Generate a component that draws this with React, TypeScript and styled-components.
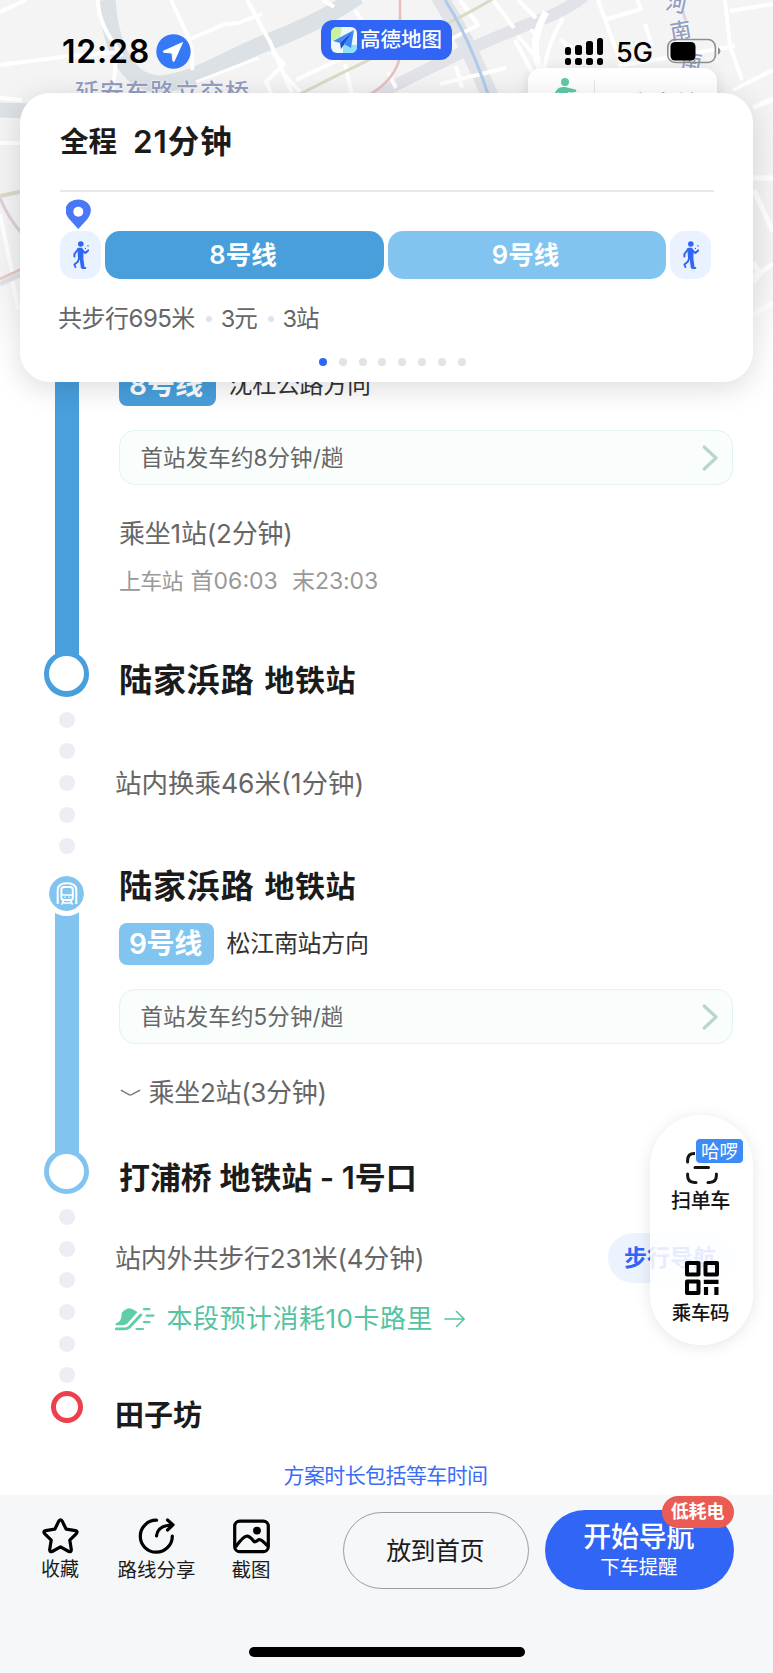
import React from "react";
import styled, { createGlobalStyle } from "styled-components";

const BLUE8 = "#489fdc";
const BLUE9 = "#82c4f0";

const GlobalStyle = createGlobalStyle`
  * { box-sizing: border-box; }
  body {
    margin: 0;
    background: #fff;
    font-family: "Inter", "Noto Sans CJK SC", sans-serif;
  }
  svg { display: block; flex: none; }
`;

interface TextProps {
  $size: number;
  $weight?: number;
  $ls?: number;
  $color?: string;
  $lh?: number;
}

const Text = styled.span<TextProps>`
  display: block;
  flex: none;
  white-space: pre;
  font-size: ${(p) => p.$size}px;
  font-weight: ${(p) => p.$weight ?? 400};
  letter-spacing: ${(p) => p.$ls ?? 0}px;
  color: ${(p) => p.$color ?? "#666"};
  line-height: ${(p) => p.$lh ?? 36}px;
`;

const Screen = styled.main`
  position: relative;
  width: 773px;
  height: 1673px;
  overflow: hidden;
  background: #fff;
  display: flex;
  flex-direction: column;
`;

/* ---------- map backdrop ---------- */

const MapLayer = styled.div`
  position: absolute;
  inset: 0 0 auto 0;
  height: 400px;
  &::after {
    content: "";
    position: absolute;
    inset: 265px 0 0 0;
    background: linear-gradient(rgba(255, 255, 255, 0), #fff 62%);
  }
`;

const PlaceName = styled.span<{ $x: number; $y: number; $size: number; $turn?: number; $ls?: number }>`
  position: absolute;
  left: ${(p) => p.$x}px;
  top: ${(p) => p.$y}px;
  font-size: ${(p) => p.$size}px;
  line-height: 30px;
  font-weight: 500;
  letter-spacing: ${(p) => p.$ls ?? 0}px;
  color: #949fc2;
  white-space: nowrap;
  text-shadow: 0 0 2px #fff, 0 0 2px #fff;
  transform: rotate(${(p) => p.$turn ?? 0}deg);
`;

const MapChip = styled.div`
  position: absolute;
  left: 528px;
  top: 68px;
  width: 189px;
  height: 60px;
  padding: 10px 18px 0 27px;
  display: flex;
  align-items: flex-start;
  border-radius: 13px;
  background: #fff;
  box-shadow: 0 2px 14px rgba(0, 0, 0, 0.12);
`;

const ChipRule = styled.i`
  width: 1px;
  height: 30px;
  margin: 2px 11px 0 17px;
  background: #e8e8e8;
`;

const ChipText = styled.span`
  padding-top: 9px;
  font-size: 23px;
  line-height: 34px;
  white-space: nowrap;
  color: #222;
`;

const CityMap = () => (
  <svg width="773" height="400" viewBox="0 0 773 400" fill="none">
    <rect width="773" height="400" fill="#f4f4f4" />
    <g stroke="#dce1e5">
      <path d="M107 0C110 40 124 84 160 84C195 82 226 58 268 42C302 29 330 16 358 -4" strokeWidth="17" />
      <path d="M112 30Q118 78 158 86L196 79" strokeWidth="14" />
      <path d="M0 110L30 111" strokeWidth="15" />
    </g>
    <g stroke="#e1e3e8">
      <path d="M360 104Q470 45 545 18Q568 9 584 -4" strokeWidth="12" />
      <path d="M439 -4Q462 34 471 54L492 100" strokeWidth="17" />
    </g>
    <g stroke="#fff" strokeWidth="4" strokeLinejoin="round">
      <path d="M0 12L26 0M98 0C98 22 110 38 122 56M0 65L70 56L122 52M116 58L113 92M0 98L22 100M0 143H26" />
      <path d="M171 0L187 34Q194 52 192 70M188 40L225 24L238 23L262 14" />
      <path d="M196 82L258 58" strokeWidth="3" />
      <path d="M247 0L270 42L292 93M272 52L284 64L266 82L272 95M284 74L300 92M323 0L334 7M355 10L372 38M330 22L352 60M370 45L296 80M345 64L352 95" />
      <path d="M460 0L478 25L430 50M493 0L514 28M518 0L536 18M540 35L530 30M540 62L518 36M515 40L532 72M456 66L462 88M440 84L506 68M388 72L396 88" />
      <path d="M563 18Q548 42 544 70M598 0L606 22L622 66M604 20L641 9L636 -3M645 24L652 46M560 40L572 48M618 66L735 46" />
      <path d="M725 0L730 46L742 80M730 11L773 4M733 90L773 70M690 46L700 70" />
      <path d="M753 108L773 99M753 178L773 178M754 190L773 232M753 277L773 264M753 315L773 303M753 262L760 274L753 282" strokeWidth="5" />
      <path d="M0 214L12 272M12 278L18 310" />
    </g>
    <path d="M546 12Q528 44 540 68" stroke="#fff" strokeWidth="7" />
    <path d="M499 -5C450 26 430 28 300 94" stroke="#d9dbc6" strokeWidth="3" />
    <path d="M0 196L24 191" stroke="#d9dbc6" strokeWidth="4" />
    <path d="M400 0V56Q396 78 371 94M0 279L24 268" stroke="#e6bfc1" strokeWidth="2.6" />
    <path d="M0 198Q8 218 24 236" stroke="#dfcddc" strokeWidth="3" />
    <path d="M0 284L24 273" stroke="#d9dbe4" strokeWidth="5" />
    <path d="M445 0Q454 14 461 28Q476 58 488 94" stroke="#aecbec" strokeWidth="3" />
    <path d="M682 8L686 22" stroke="#ddd3e4" strokeWidth="3" />
  </svg>
);

const ChipWalker = () => (
  <svg width="22" height="30" viewBox="0 0 22 30" fill="#5ccca6">
    <circle cx="10" cy="4" r="4" />
    <path d="M5 9.6Q7 8.6 10 9L20.5 11.4Q22 12.4 21 13.8Q17 15 13 14L12 22H4V14L1 17Q-1 16 .6 13.4Q2.6 10.4 5 9.6Z" />
  </svg>
);

/* ---------- status bar ---------- */

const StatusBar = styled.header`
  position: relative;
  height: 93px;
  flex: none;
  display: flex;
  align-items: flex-start;
`;

const Clock = styled(Text)`
  width: 94px;
  margin: 34px 0 0 62px;
`;

const AmapBadge = styled.div`
  width: 131px;
  height: 40px;
  margin: 20px 0 0 130px;
  padding-left: 10px;
  display: flex;
  align-items: center;
  gap: 3px;
  border-radius: 12px;
  background: #3065f6;
`;

const Signal = styled.div`
  width: 39px;
  height: 27px;
  margin: 38px 0 0 112.5px;
  display: flex;
  justify-content: space-between;
`;

const SignalColumn = styled.div<{ $h: number }>`
  width: 6.6px;
  display: flex;
  flex-direction: column;
  justify-content: flex-end;
  gap: 3.5px;
  &::before {
    content: "";
    height: ${(p) => p.$h}px;
    border-radius: 2.5px;
    background: #000;
  }
  &::after {
    content: "";
    height: 7px;
    border-radius: 2.5px;
    background: #000;
  }
`;

const Network = styled(Text)`
  width: 37px;
  margin: 34.5px 0 0 12.5px;
`;

const StatusIcon = styled.svg<{ $top: number; $left?: number }>`
  margin: ${(p) => p.$top}px 0 0 ${(p) => p.$left ?? 0}px;
`;

const LocationIcon = () => (
  <StatusIcon $top={34} width="35" height="35" viewBox="0 0 35 35">
    <circle cx="17.5" cy="17.5" r="17.2" fill="#3579f6" />
    <path d="M26.5 8.6L7.4 17.2Q6.7 18 7.8 18.2L16 19.1L17 27Q17.4 28.2 18.1 27.2Z" fill="#fff" stroke="#fff" strokeWidth="1" strokeLinejoin="round" />
  </StatusIcon>
);

const AmapLogo = () => (
  <svg width="26" height="26" viewBox="0 0 26 26">
    <defs>
      <clipPath id="logo"><rect width="26" height="26" rx="6" /></clipPath>
    </defs>
    <g clipPath="url(#logo)">
      <rect width="26" height="26" fill="#eef7fb" />
      <path d="M0 0H11L9 10L0 14Z" fill="#c9f29b" />
      <path d="M12 17L26 18V26H12Z" fill="#8fe0fb" />
      <path d="M23 3L2 14L9 16Z" fill="#3f8df8" />
      <path d="M23 3L9 16L10 22Z" fill="#1c50cf" />
      <path d="M23 3L13 17L20 21Z" fill="#3d86f7" />
    </g>
  </svg>
);

const BatteryIcon = () => (
  <StatusIcon $top={38} $left={12.5} width="56" height="26" viewBox="0 0 56 26">
    <rect x="1.8" y="1.5" width="47.6" height="23" rx="7.5" fill="none" stroke="#8d8e90" strokeWidth="1.6" />
    <rect x="4.5" y="4" width="25" height="18.5" rx="4.5" />
    <path d="M52 9Q57 13 52 17Z" fill="#8d8e90" />
  </StatusIcon>
);

/* ---------- summary card ---------- */

const SummaryCard = styled.section`
  position: relative;
  z-index: 2;
  flex: none;
  width: 733px;
  height: 289px;
  margin-left: 20px;
  padding: 29px 40px 0;
  display: flex;
  flex-direction: column;
  border-radius: 30px;
  background: #fff;
  box-shadow: 0 6px 30px rgba(0, 0, 0, 0.14);
`;

const CardTitle = styled.h1`
  margin: 0;
  height: 40px;
  display: flex;
  gap: 16px;
`;

const Divider = styled.hr`
  width: 654px;
  height: 1.5px;
  margin: 28px 0 7.5px;
  border: 0;
  background: #e9e9ea;
`;

const Segments = styled.div`
  height: 48px;
  margin: 2px 0 0 -0.5px;
  display: grid;
  grid-template-columns: 41px 279px 278px 41px;
  gap: 4px;
`;

const SegmentPill = styled.div<{ $bg: string; $nudge?: number }>`
  display: flex;
  align-items: center;
  justify-content: center;
  padding-right: ${(p) => p.$nudge ?? 0}px;
  border-radius: 15px;
  background: ${(p) => p.$bg};
`;

const Facts = styled.div`
  margin: 22px 0 0 -2px;
  display: flex;
  align-items: center;
`;

const FactDot = styled.i`
  width: 6px;
  height: 6px;
  margin: 0 8.7px 0 11.2px;
  border-radius: 50%;
  background: #dfe2e7;
`;

const Pager = styled.div`
  margin: 20.5px 0 0 259px;
  display: flex;
  gap: 11.8px;
`;

const PagerDot = styled.i<{ $on?: boolean }>`
  width: 8px;
  height: 8px;
  border-radius: 50%;
  background: ${(p) => (p.$on ? "#3065f6" : "#e0e3e8")};
`;

const Pin = styled.svg`
  margin-left: 6.3px;
`;

const PinIcon = () => (
  <Pin width="25" height="30" viewBox="0 0 25 30">
    <path d="M12.3 30L3.6 20.6C-6 9 3 0.4 12.3 0.4S30 9 21 20.6Z" fill="#4878f7" />
    <circle cx="12.3" cy="12.8" r="5" fill="#fff" />
  </Pin>
);

const WalkIcon = () => (
  <svg width="18" height="28" viewBox="-1 0 18 28" fill="none" stroke="#2f66f5" strokeLinecap="round" strokeLinejoin="round">
    <circle cx="8.8" cy="3" r="2.8" fill="#2f66f5" stroke="none" />
    <path d="M6 7.4H9.6L11 9.4L10.8 18L12 26.6H9.4L8.4 18.5L6.6 17Z" fill="#2f66f5" strokeWidth="1.2" />
    <path d="M6 8.4L2.4 13V15.4M10 9.4L13.4 12L16.2 9.4" strokeWidth="2" />
    <path d="M7.2 17L5.8 20.8L2.4 23.6L3.4 26M10.6 27H13.4" strokeWidth="1.9" />
    <path d="M13.4 7.4V7.5M16 4.8V4.9" strokeWidth="1.4" />
  </svg>
);

/* ---------- route list ---------- */

const Route = styled.section`
  position: relative;
  z-index: 1;
  flex: none;
  height: 1131px;
  margin-top: -18px;
  display: flex;
  flex-direction: column;
`;

const Leg = styled.div<{ $h: number }>`
  height: ${(p) => p.$h}px;
  flex: none;
  display: grid;
  grid-template-columns: 105px 614px;
  padding-left: 14px;
`;

const Rail = styled.div<{ $top?: number; $bottom?: number; $gap?: number }>`
  display: flex;
  flex-direction: column;
  align-items: center;
  gap: ${(p) => p.$gap ?? 0}px;
  padding: ${(p) => p.$top ?? 0}px 0 ${(p) => p.$bottom ?? 0}px;
`;

const Body = styled.div<{ $top?: number; $shift?: number }>`
  padding-top: ${(p) => p.$top ?? 0}px;
  margin-left: ${(p) => p.$shift ?? 0}px;
  display: flex;
  flex-direction: column;
`;

const Track = styled.div<{ $color: string }>`
  flex: 1;
  width: 24px;
  background: ${(p) => p.$color};
`;

const Ring = styled.div<{ $color: string; $size: number; $inner: number }>`
  position: relative;
  width: ${(p) => p.$size}px;
  height: ${(p) => p.$size}px;
  flex: none;
  margin-top: -4px;
  padding: ${(p) => (p.$size - p.$inner) / 2}px;
  border-radius: 50%;
  background: ${(p) => p.$color};
  &::before {
    content: "";
    display: block;
    height: 100%;
    border-radius: 50%;
    background: #fff;
  }
`;

const WalkDot = styled.i`
  width: 16px;
  height: 16px;
  flex: none;
  border-radius: 50%;
  background: #edeef3;
`;

const MetroBadge = styled.div`
  position: relative;
  width: 45px;
  height: 45px;
  flex: none;
  margin-bottom: -8px;
  border: 5px solid #fff;
  border-radius: 50%;
  background: ${BLUE9};
  background-clip: padding-box;
  display: flex;
  align-items: center;
  justify-content: center;
`;

const LineRow = styled.div<{ $top?: number }>`
  height: 42px;
  margin-top: ${(p) => p.$top ?? 0}px;
  display: flex;
  align-items: center;
`;

const LineTag = styled.div<{ $bg: string; $w: number }>`
  width: ${(p) => p.$w}px;
  height: 42px;
  margin-right: 12.5px;
  display: flex;
  align-items: center;
  padding-left: 10px;
  border-radius: 8px;
  background: ${(p) => p.$bg};
`;

const Frequency = styled.div`
  height: 55px;
  margin-top: 24px;
  padding: 1px 14.5px 0 20.5px;
  display: flex;
  align-items: center;
  justify-content: space-between;
  border: 1.5px solid #e1f4ed;
  border-radius: 16px;
  background: #f9fdfc;
`;

const Line = styled.div<{ $top: number; $gap?: number }>`
  margin-top: ${(p) => p.$top}px;
  display: flex;
  align-items: center;
  gap: ${(p) => p.$gap ?? 0}px;
`;

const WalkNav = styled.div`
  width: 125px;
  height: 50px;
  margin: -8px 0 -6px auto;
  padding-left: 16px;
  display: flex;
  align-items: center;
  border-radius: 25px;
  background: #edf2ff;
`;

const Note = styled.div`
  margin-top: 26px;
  padding-right: 2px;
  display: flex;
  justify-content: center;
`;

const Station = ({ top = 0 }: { top?: number }) => (
  <Line $top={top} $gap={10}>
    <Text $size={33} $weight={600} $ls={0.9} $color="#1b1b1b" $lh={40}>陆家浜路</Text>
    <Text $size={30} $weight={600} $ls={0.4} $color="#1b1b1b" $lh={40}>地铁站</Text>
  </Line>
);

const ChevronRight = () => (
  <svg width="16" height="26" viewBox="0 0 16 26" fill="none">
    <path d="M2.2 2L14 13L2.2 24" stroke="#b9d6cd" strokeWidth="3.2" strokeLinecap="round" strokeLinejoin="round" />
  </svg>
);

const MetroIcon = () => (
  <svg width="22" height="25" viewBox="0 0 22 25" fill="none" stroke="#fff">
    <path d="M1.7 23V9Q1.7 2.2 11 2.2T20.3 9V23" strokeWidth="2" />
    <rect x="5.4" y="6" width="11.4" height="13" rx="2.6" strokeWidth="2" />
    <path d="M6 14H16M7.6 19.8L5.6 23.6M14.6 19.8L16.6 23.6M7.5 22H14.7" strokeWidth="1.6" />
    <path d="M8.4 16.3H9.6M12.6 16.3H13.8" strokeWidth="1.6" />
  </svg>
);

const ExpandIcon = () => (
  <svg width="22" height="8" viewBox="0 0 22 8" fill="none">
    <path d="M2.4 1.4L10 5.6Q11.2 6.2 12.6 5.6L20.6 1.4" stroke="#777" strokeWidth="1.5" strokeLinecap="round" />
  </svg>
);

const ShoeIcon = () => (
  <svg width="40" height="24" viewBox="0 0 40 24" fill="none">
    <path d="M6.6 6Q10 1.6 14 1.2Q17 1.2 22.5 5L12.4 16.4Q10 18.6 1 18.2Q-.4 17 2 15.8Q7 14 6.6 6Z" fill="#5fcea8" />
    <path d="M25.8 8L15.5 19Q13.5 21.8 9 21.8H1.2" stroke="#5fcea8" strokeWidth="2.8" strokeLinecap="round" />
    <path d="M29 2.2H34.5M31.5 8.6H38.5M29 15.2H34.5M21.5 22H28" stroke="#5fcea8" strokeWidth="2.2" strokeLinecap="round" />
  </svg>
);

const ArrowRight = () => (
  <svg width="22" height="18" viewBox="0 0 22 18" fill="none">
    <path d="M1 9H20M12.5 1.5L20.2 9L12.5 16.5" stroke="#55c3a0" strokeWidth="1.6" strokeLinecap="round" strokeLinejoin="round" />
  </svg>
);

/* ---------- floating panel ---------- */

const FloatPanel = styled.aside`
  position: absolute;
  z-index: 3;
  left: 650px;
  top: 1115px;
  width: 103px;
  height: 230px;
  padding-top: 37px;
  display: flex;
  flex-direction: column;
  align-items: center;
  border-radius: 52px;
  background: rgba(255, 255, 255, 0.88);
  box-shadow: 0 2px 16px rgba(0, 0, 0, 0.1);
`;

const HelloBadge = styled.div`
  position: absolute;
  left: 45px;
  top: 23px;
  width: 49px;
  height: 26px;
  display: flex;
  align-items: center;
  justify-content: center;
  border: 1px solid #fff;
  border-radius: 5px;
  background: #3d8bf6;
`;

const PanelLabel = styled(Text)<{ $top: number }>`
  margin: ${(p) => p.$top}px 2px 0 0;
`;

const QrSlot = styled.div`
  margin-top: 45px;
`;

const ScanIcon = () => (
  <svg width="32" height="32" viewBox="0 0 32 32" fill="none" stroke="#151515" strokeWidth="3" strokeLinecap="round">
    <path d="M1.6 10V8.5Q1.6 1.6 8.5 1.6H10M22 1.6H23.5Q30.4 1.6 30.4 8.5V10M1.6 22V23.5Q1.6 30.4 8.5 30.4H10M30.4 22V23.5Q30.4 30.4 23.5 30.4H22M9 15.6H22.5" />
  </svg>
);

const QrIcon = () => (
  <svg width="34" height="34" viewBox="0 0 34 34" fill="none" stroke="#000">
    <path d="M2 2H13.5V13.5H2ZM20.5 2H32V13.5H20.5ZM2 20.5H13.5V32H2Z" strokeWidth="4" strokeLinejoin="round" />
    <path d="M18.8 20.8H33.5M21 26V34M31.4 26V34" strokeWidth="4.2" />
  </svg>
);

/* ---------- bottom bar ---------- */

const BottomBar = styled.footer`
  position: relative;
  z-index: 2;
  flex: none;
  height: 178px;
  display: flex;
  align-items: flex-start;
  background: #f6f7f9;
`;

const Action = styled.button<{ $left: number; $w: number }>`
  width: ${(p) => p.$w}px;
  margin: 22.5px 0 0 ${(p) => p.$left}px;
  padding: 0;
  border: 0;
  background: none;
  font-family: inherit;
  display: flex;
  flex-direction: column;
  align-items: center;
  gap: 1px;
`;

const HomeButton = styled.button`
  width: 186px;
  height: 77px;
  margin: 17px 0 0 63px;
  padding: 0 2px 0 0;
  font-family: inherit;
  display: flex;
  align-items: center;
  justify-content: center;
  border: 1.3px solid #9c9d9f;
  border-radius: 39px;
  background: transparent;
`;

const StartButton = styled.button`
  position: relative;
  width: 188.5px;
  height: 80px;
  margin: 15px 0 0 16px;
  padding: 10px 1px 0 0;
  border: 0;
  font-family: inherit;
  display: flex;
  flex-direction: column;
  align-items: center;
  border-radius: 40px;
  background: #3165f6;
`;

const PowerBadge = styled.div`
  position: absolute;
  right: 0;
  top: -14px;
  width: 72px;
  height: 32px;
  display: flex;
  align-items: center;
  justify-content: center;
  border-radius: 16px;
  background: #ea5b53;
`;

const HomeIndicator = styled.div`
  position: absolute;
  left: 249px;
  bottom: 16px;
  width: 276px;
  height: 10px;
  border-radius: 5px;
  background: #000;
`;

const StarIcon = () => (
  <svg width="37" height="36" viewBox="0 0 37 36" fill="none">
    <path d="M16.9 2.9Q18.5 .6 20.1 2.9L24.2 11.2L33.4 12.6Q36.2 13.4 34.4 15.6L27.8 22.2L29.3 31.6Q29.4 34.4 26.8 33.5L18.5 28.9L10.2 33.5Q7.6 34.4 7.7 31.6L9.2 22.2L2.6 15.6Q.8 13.4 3.6 12.6L12.8 11.2Z" stroke="#000" strokeWidth="3.2" strokeLinejoin="round" />
  </svg>
);

const ShareIcon = () => (
  <svg width="37" height="36" viewBox="0 0 37 36" fill="none" stroke="#000" strokeWidth="3.2" strokeLinecap="round" strokeLinejoin="round">
    <path d="M18.5 2.2A16 16 0 1 0 34.3 18" />
    <path d="M18.5 18Q19.5 7.5 34.5 7M29.5 2L35 6.9L29.5 12" />
  </svg>
);

const PictureIcon = () => (
  <svg width="37" height="36" viewBox="0 0 37 36" fill="none" stroke="#000" strokeWidth="3.2">
    <rect x="1.7" y="3.2" width="33.6" height="30.5" rx="5" />
    <circle cx="24" cy="12.6" r="3.9" fill="#000" stroke="none" />
    <path d="M2.5 29Q11 17 14.5 18.2Q17 18.5 21 23.6Q22.2 24.6 26 21.6Q28.5 21 34.5 28" strokeLinejoin="round" />
  </svg>
);

const dots = (n: number) => Array.from({ length: n }, (_, i) => <WalkDot key={i} />);

export default function App() {
  return (
    <Screen>
      <GlobalStyle />
      <MapLayer>
        <CityMap />
        <PlaceName $x={75} $y={78} $size={24} $ls={1}>延安东路立交桥</PlaceName>
        <PlaceName $x={666} $y={-11} $size={21} $turn={12}>河</PlaceName>
        <PlaceName $x={670} $y={16} $size={21} $turn={-10}>南</PlaceName>
        <PlaceName $x={681} $y={47} $size={21} $turn={10}>南</PlaceName>
        <MapChip>
          <ChipWalker />
          <ChipRule />
          <ChipText>少走多益</ChipText>
        </MapChip>
      </MapLayer>

      <StatusBar>
        <Clock $size={32} $weight={600} $ls={0.8} $color="#000">12:28</Clock>
        <LocationIcon />
        <AmapBadge>
          <AmapLogo />
          <Text $size={20.5} $weight={500} $color="#fff">高德地图</Text>
        </AmapBadge>
        <Signal>
          <SignalColumn $h={8} />
          <SignalColumn $h={10} />
          <SignalColumn $h={13.5} />
          <SignalColumn $h={16.5} />
        </Signal>
        <Network $size={27} $weight={500} $color="#000">5G</Network>
        <BatteryIcon />
      </StatusBar>

      <SummaryCard>
        <CardTitle>
          <Text $size={28.5} $weight={600} $color="#1b1b1b" $lh={40}>全程</Text>
          <Text $size={31.5} $weight={600} $ls={0.9} $color="#1b1b1b" $lh={40}>21分钟</Text>
        </CardTitle>
        <Divider />
        <PinIcon />
        <Segments>
          <SegmentPill $bg="#eaf1ff"><WalkIcon /></SegmentPill>
          <SegmentPill $bg={BLUE8} $nudge={2}><Text $size={25.5} $weight={600} $color="#fff">8号线</Text></SegmentPill>
          <SegmentPill $bg={BLUE9} $nudge={2}><Text $size={25.5} $weight={600} $color="#fff">9号线</Text></SegmentPill>
          <SegmentPill $bg="#eaf1ff"><WalkIcon /></SegmentPill>
        </Segments>
        <Facts>
          <Text $size={24} $ls={-0.5}>共步行695米</Text>
          <FactDot />
          <Text $size={23.5} $ls={-1.1}>3元</Text>
          <FactDot />
          <Text $size={23.5} $ls={-0.9}>3站</Text>
        </Facts>
        <Pager>
          <PagerDot $on />
          {Array.from({ length: 7 }, (_, i) => <PagerDot key={i} />)}
        </Pager>
      </SummaryCard>

      <Route>
        <Leg $h={336}>
          <Rail $bottom={3.5}>
            <Track $color={BLUE8} />
            <Ring $color={BLUE8} $size={45.5} $inner={35} />
          </Rail>
          <Body>
            <LineRow>
              <LineTag $bg={BLUE8} $w={97}><Text $size={28} $weight={600} $color="#fff">8号线</Text></LineTag>
              <Text $size={24} $ls={-0.3} $color="#333">沈杜公路方向</Text>
            </LineRow>
            <Frequency>
              <Text $size={22.5} $ls={0.1}>首站发车约8分钟/趟</Text>
              <ChevronRight />
            </Frequency>
            <Line $top={30.5}><Text $size={26} $ls={-0.2}>乘坐1站(2分钟)</Text></Line>
            <Line $top={14.5} $gap={8}>
              <Text $size={22} $ls={-0.8} $color="#999" $lh={30}>上车站</Text>
              <Text $size={23} $color="#999" $lh={30}>首06:03</Text>
              <Text $size={23} $ls={-0.1} $color="#999" $lh={30}> 末23:03</Text>
            </Line>
            <Station top={64} />
          </Body>
        </Leg>

        <Leg $h={166}>
          <Rail $top={11.5} $gap={15.7}>{dots(5)}</Rail>
          <Body $top={65} $shift={-4}>
            <Text $size={26.5}>站内换乘46米(1分钟)</Text>
          </Body>
        </Leg>

        <Leg $h={332}>
          <Rail $top={5} $bottom={4}>
            <MetroBadge><MetroIcon /></MetroBadge>
            <Track $color={BLUE9} />
            <Ring $color={BLUE9} $size={45.5} $inner={35} />
          </Rail>
          <Body>
            <Station />
            <LineRow $top={17}>
              <LineTag $bg={BLUE9} $w={95}><Text $size={28} $weight={600} $ls={-0.3} $color="#fff">9号线</Text></LineTag>
              <Text $size={24} $ls={-0.3} $color="#333">松江南站方向</Text>
            </LineRow>
            <Frequency>
              <Text $size={22.5} $ls={0.1}>首站发车约5分钟/趟</Text>
              <ChevronRight />
            </Frequency>
            <Line $top={30.5} $gap={7.5}>
              <ExpandIcon />
              <Text $size={26} $ls={-0.3}>乘坐2站(3分钟)</Text>
            </Line>
            <Line $top={47}>
              <Text $size={31} $weight={600} $ls={-0.1} $color="#1b1b1b" $lh={40}>打浦桥 地铁站 - 1号口</Text>
            </Line>
          </Body>
        </Leg>

        <Leg $h={193}>
          <Rail $top={11} $gap={15.7}>{dots(6)}</Rail>
          <Body $top={43} $shift={-4}>
            <Line $top={0}>
              <Text $size={26} $ls={-0.2}>站内外共步行231米(4分钟)</Text>
              <WalkNav><Text $size={23} $weight={600} $color="#3165f6">步行导航</Text></WalkNav>
            </Line>
            <Line $top={24} $gap={11.5}>
              <ShoeIcon />
              <Text $size={26} $ls={0.5} $color="#55c3a0">本段预计消耗10卡路里</Text>
              <ArrowRight />
            </Line>
          </Body>
        </Leg>

        <Leg $h={44}>
          <Rail $top={4}><Ring $color="#ee3f4d" $size={32} $inner={22} /></Rail>
          <Body $top={5} $shift={-4}>
            <Text $size={29} $weight={600} $color="#1b1b1b" $lh={40}>田子坊</Text>
          </Body>
        </Leg>

        <Note>
          <Text $size={21} $ls={-0.6} $color="#3b6cf6" $lh={30}>方案时长包括等车时间</Text>
        </Note>
      </Route>

      <BottomBar>
        <Action $left={32} $w={56}>
          <StarIcon />
          <Text $size={19} $color="#1b1b1b" $lh={30}>收藏</Text>
        </Action>
        <Action $left={28} $w={81}>
          <ShareIcon />
          <Text $size={19.5} $color="#1b1b1b" $lh={30}>路线分享</Text>
        </Action>
        <Action $left={25} $w={58}>
          <PictureIcon />
          <Text $size={19.5} $color="#1b1b1b" $lh={30}>截图</Text>
        </Action>
        <HomeButton>
          <Text $size={25} $ls={-0.6} $color="#1b1b1b">放到首页</Text>
        </HomeButton>
        <StartButton>
          <Text $size={28} $weight={500} $ls={-0.3} $color="#fff" $lh={34}>开始导航</Text>
          <Text $size={19.5} $ls={-0.3} $color="#fff" $lh={26}>下车提醒</Text>
          <PowerBadge><Text $size={18} $weight={600} $ls={-0.2} $color="#fff">低耗电</Text></PowerBadge>
        </StartButton>
        <HomeIndicator />
      </BottomBar>

      <FloatPanel>
        <ScanIcon />
        <HelloBadge><Text $size={18.5} $color="#fff" $lh={23}>哈啰</Text></HelloBadge>
        <PanelLabel $size={20} $weight={500} $ls={-0.4} $color="#151515" $lh={30} $top={2}>扫单车</PanelLabel>
        <QrSlot><QrIcon /></QrSlot>
        <PanelLabel $size={19.5} $weight={500} $ls={-0.4} $color="#151515" $lh={30} $top={3}>乘车码</PanelLabel>
      </FloatPanel>
    </Screen>
  );
}
